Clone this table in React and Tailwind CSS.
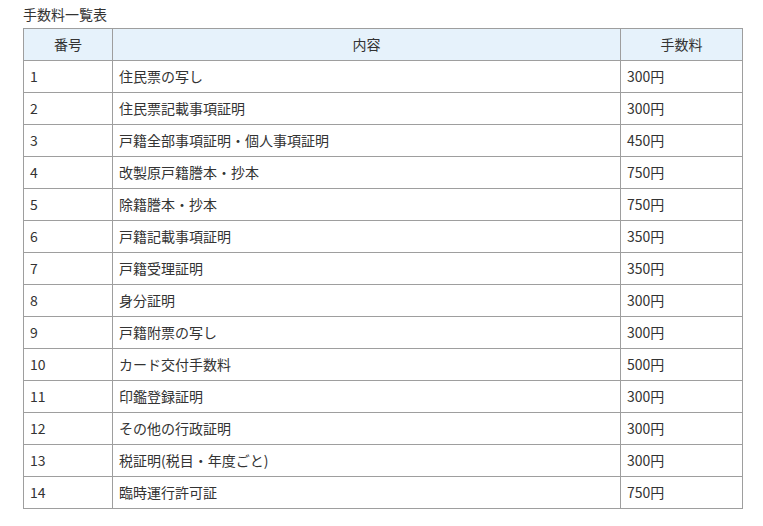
import React from "react";

const rows = [
  ["1", "住民票の写し", "300円"],
  ["2", "住民票記載事項証明", "300円"],
  ["3", "戸籍全部事項証明・個人事項証明", "450円"],
  ["4", "改製原戸籍謄本・抄本", "750円"],
  ["5", "除籍謄本・抄本", "750円"],
  ["6", "戸籍記載事項証明", "350円"],
  ["7", "戸籍受理証明", "350円"],
  ["8", "身分証明", "300円"],
  ["9", "戸籍附票の写し", "300円"],
  ["10", "カード交付手数料", "500円"],
  ["11", "印鑑登録証明", "300円"],
  ["12", "その他の行政証明", "300円"],
  ["13", "税証明(税目・年度ごと)", "300円"],
  ["14", "臨時運行許可証", "750円"],
];

const App = () => {
  return (
    <div className="bg-white min-h-[526px] pl-[23px] pt-[4px] text-[14px] text-[#333] font-['Meiryo','Noto_Sans_CJK_JP',sans-serif]">
      <p className="h-[24px] leading-[20px]">手数料一覧表</p>
      <table className="w-[720px] border-collapse">
        <thead>
          <tr className="h-[32px] bg-[#e6f2fb]">
            <th className="w-[89px] border border-[#9e9e9e] font-normal text-center">番号</th>
            <th className="w-[508px] border border-[#9e9e9e] font-normal text-center">内容</th>
            <th className="border border-[#9e9e9e] font-normal text-center">手数料</th>
          </tr>
        </thead>
        <tbody>
          {rows.map((r, i) => (
            <tr className="h-[32px]" key={i}>
              <td className="border border-[#9e9e9e] px-[6px]">{r[0]}</td>
              <td className="border border-[#9e9e9e] px-[6px]">{r[1]}</td>
              <td className="border border-[#9e9e9e] px-[6px]">{r[2]}</td>
            </tr>
          ))}
        </tbody>
      </table>
    </div>
  );
};

export default App;
